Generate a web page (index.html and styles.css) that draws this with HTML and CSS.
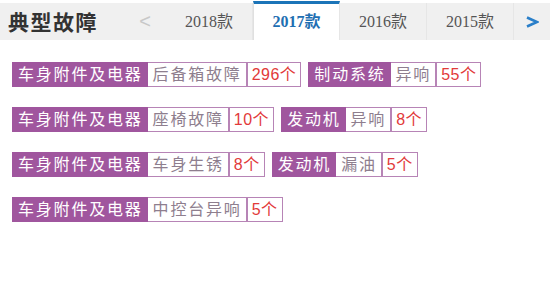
FILE: index.html
```html
<!DOCTYPE html>
<html lang="zh-CN">
<head>
<meta charset="utf-8">
<title>典型故障</title>
<link rel="stylesheet" href="styles.css">
</head>
<body>
<div class="header">
  <div class="title">典型故障</div>
  <div class="nav prev">&lt;</div>
  <div class="tab">2018款</div>
  <div class="tab active">2017款</div>
  <div class="tab">2016款</div>
  <div class="tab">2015款</div>
  <div class="nav next">
    <svg width="14" height="14" viewBox="0 0 14 14"><path d="M2 2.5 L12 7 L2 11.5" fill="none" stroke="#2a7fc9" stroke-width="2.6"/></svg>
  </div>
</div>
<div class="tags">
  <div class="tag"><span class="cat">车身附件及电器</span><span class="name">后备箱故障</span><span class="count">296个</span></div>
  <div class="tag"><span class="cat">制动系统</span><span class="name">异响</span><span class="count">55个</span></div>
  <div class="tag"><span class="cat">车身附件及电器</span><span class="name">座椅故障</span><span class="count">10个</span></div>
  <div class="tag"><span class="cat">发动机</span><span class="name">异响</span><span class="count">8个</span></div>
  <div class="tag"><span class="cat">车身附件及电器</span><span class="name">车身生锈</span><span class="count">8个</span></div>
  <div class="tag"><span class="cat">发动机</span><span class="name">漏油</span><span class="count">5个</span></div>
  <div class="tag"><span class="cat">车身附件及电器</span><span class="name">中控台异响</span><span class="count">5个</span></div>
</div>
</body>
</html>
```

FILE: styles.css
```css
html, body {
  margin: 0;
  padding: 0;
  background: #fff;
}
body {
  font-family: "Liberation Sans", "Noto Sans CJK SC", sans-serif;
  width: 550px;
}
.header {
  display: flex;
  height: 37px;
  margin-top: 3px;
  background: #f0f0f0;
}
.title {
  width: 122px;
  padding-left: 8px;
  font-size: 21px;
  font-weight: bold;
  letter-spacing: 1.5px;
  color: #333;
  line-height: 37px;
  font-family: "Noto Sans CJK SC", sans-serif;
}
.nav {
  width: 36px;
  display: flex;
  align-items: center;
  justify-content: center;
}
.prev {
  color: #c8c8c8;
  font-size: 20px;
  padding-right: 6px;
  width: 30px;
  font-family: "Liberation Sans", sans-serif;
}
.next {
  width: 36px;
}
.tab {
  width: 86px;
  border-right: 1px solid #e6e6e6;
  text-align: center;
  line-height: 37px;
  font-size: 16px;
  color: #555;
  font-family: "Liberation Serif", "Noto Sans CJK SC", serif;
}
.tab.active {
  background: #fff;
  color: #1f6fb2;
  font-weight: bold;
  border-top: 3px solid #1b74b8;
  border-left: 1px solid #e0e0e0;
  margin-top: -2px;
  height: 36px;
  line-height: 36px;
  width: 85px;
}
.tags {
  display: flex;
  flex-wrap: wrap;
  column-gap: 7px;
  row-gap: 20px;
  padding: 22px 12px 0 12px;
  width: 520px;
}
.tag {
  display: flex;
  height: 25px;
  font-size: 16px;
  letter-spacing: 1.8px;
  line-height: 23px;
}
.tag span {
  display: block;
  border: 1px solid #b784b6;
}
.cat {
  background: #a0569e;
  border-color: #a0569e !important;
  color: #fff;
  padding: 0 4px 0 5px;
}
.name {
  color: #8e7e8e;
  border-left: 0 !important;
  padding: 0 4px 0 5px;
}
.count {
  color: #e23a3a;
  border-left: 1px solid #b784b6;
  padding: 0 4px 0 4px;
  letter-spacing: 0.5px;
}
```
